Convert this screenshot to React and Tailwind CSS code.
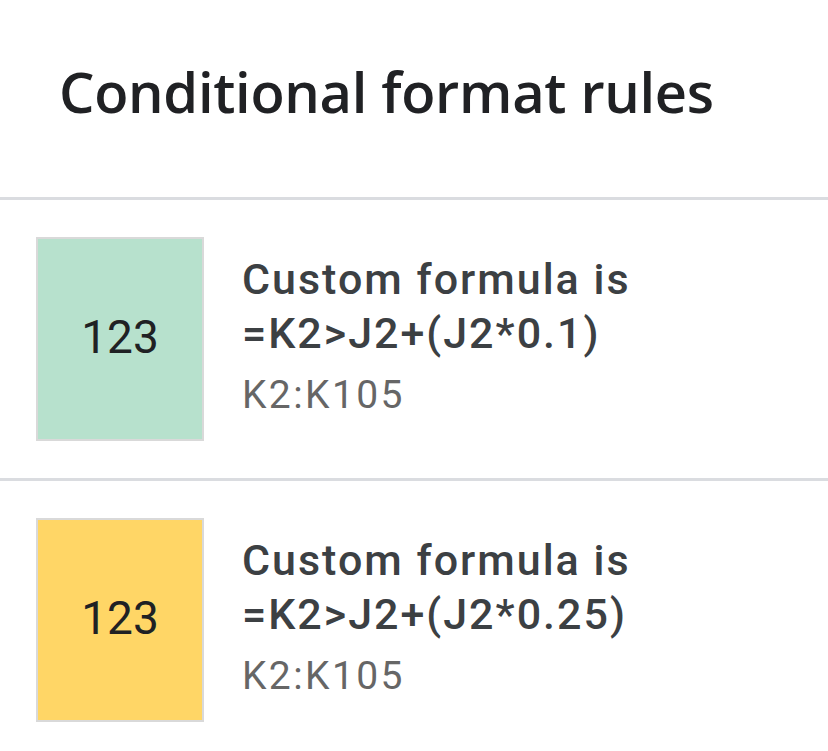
const rules = [
  { color: 'bg-[#b7e1cd]', formula: '=K2>J2+(J2*0.1)', range: 'K2:K105' },
  { color: 'bg-[#ffd666]', formula: '=K2>J2+(J2*0.25)', range: 'K2:K105' },
];

export default function App() {
  return (
    <div className="w-[828px] h-[751px] bg-white overflow-hidden">
      <div className="h-[197px] pl-[59px] pt-[58px]">
        <h1 className="text-[56px] leading-[66px] font-semibold text-[#202124] tracking-[-0.3px]" style={{ fontFamily: '"Open Sans", sans-serif' }}>
          Conditional format rules
        </h1>
      </div>

      {rules.map((rule, i) => (
        <div key={i} className="border-t-[3px] border-[#dadce0] px-[36px] py-[37px] flex items-center gap-[38px]" style={{ fontFamily: 'Roboto, sans-serif' }}>
          <div className={`w-[168px] h-[204px] shrink-0 border-2 border-[#d9d9d9] ${rule.color} flex items-center justify-center`}>
            <span className="text-[46px] text-[#202124] pb-[4px]">123</span>
          </div>
          <div className="flex flex-col">
            <div className="text-[43px] leading-[54px] font-medium text-[#3c4043] tracking-[2px]">Custom formula is</div>
            <div className="text-[43px] leading-[54px] font-medium text-[#3c4043] tracking-[2px]">{rule.formula}</div>
            <div className="mt-[4px] text-[39px] leading-[62px] text-[#666666] tracking-[2.4px]">{rule.range}</div>
          </div>
        </div>
      ))}
    </div>
  );
}
